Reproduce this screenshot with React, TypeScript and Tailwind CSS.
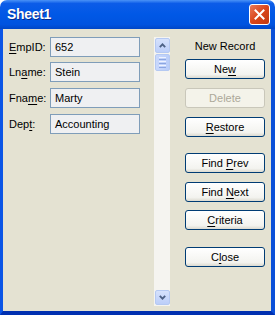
import React from 'react';

const font = "font-['Liberation_Sans',Arial,sans-serif]";

// label with one underlined mnemonic letter
const Mn = ({ text, at }: { text: string; at: number }) => (
  <span className="whitespace-pre">
    {text.slice(0, at)}
    <span className="underline underline-offset-[2px]">{text[at]}</span>
    {text.slice(at + 1)}
  </span>
);

const Field = ({ label, at, value, mt }: { label: string; at: number; value: string; mt: string }) => (
  <div className={`flex items-center ${mt}`}>
    <label className="w-[41px] text-[11px] text-black">
      <Mn text={label} at={at} />
    </label>
    <div className="flex h-[20px] w-[90px] items-center border border-[#7f9db9] bg-[#eff0f2] pl-[4px] text-[11px] text-black">
      {value}
    </div>
  </div>
);

const Btn = ({ label, at, mt, disabled }: { label: string; at: number; mt: string; disabled?: boolean }) => (
  <button
    className={
      disabled
        ? `${mt} flex h-[20px] w-[80px] items-center justify-center rounded-[3px] border border-[#c9c7ba] bg-[#f4f3ea] text-[11px] text-[#aca899]`
        : `${mt} flex h-[20px] w-[80px] items-center justify-center rounded-[3px] border border-[#003c74] bg-[linear-gradient(#ffffff,#f3f3ef_80%,#dcdad0)] text-[11px] text-black`
    }
  >
    {disabled ? label : <Mn text={label} at={at} />}
  </button>
);

const ScrollBtn = ({ up }: { up?: boolean }) => (
  <div className="flex h-[15px] w-[15px] items-center justify-center rounded-[2px] border border-[#b5c9f2] bg-[linear-gradient(#d6e2fc,#bccef9)]">
    <svg width="7" height="5" viewBox="0 0 7 5">
      <path
        d={up ? 'M0.8 4.2 L3.5 1.3 L6.2 4.2' : 'M0.8 0.8 L3.5 3.7 L6.2 0.8'}
        fill="none"
        stroke="#4d6185"
        strokeWidth="1.8"
      />
    </svg>
  </div>
);

export default function App() {
  return (
    <div className={`flex h-[315px] w-[275px] flex-col ${font}`}>
      {/* title bar */}
      <div className="flex h-[29px] items-center justify-between rounded-t-[7px] bg-[linear-gradient(#4a92f7_0%,#0c5ce8_12%,#0058e6_50%,#0053df_85%,#0046c6_100%)] pl-[7px] pr-[5px]">
        <span className="text-[14px] font-bold tracking-[-0.3px] text-white [text-shadow:1px_1px_0_#0a2a8a]">Sheet1</span>
        <div className="flex h-[21px] w-[21px] items-center justify-center rounded-[3px] border border-white bg-[linear-gradient(135deg,#eb7a5a,#d9451a_50%,#c13810)]">
          <svg width="11" height="11" viewBox="0 0 11 11">
            <path d="M1.5 1.5 L9.5 9.5 M9.5 1.5 L1.5 9.5" stroke="white" strokeWidth="2" strokeLinecap="square" />
          </svg>
        </div>
      </div>

      {/* body */}
      <div className="flex flex-1 border-b-[4px] border-l-[3px] border-r-[4px] border-b-[#0030b0] border-l-[#0b55e6] border-r-[#0a4fd8] bg-[#e4e2d2] pl-[6px] pt-[8px]">
        <div className="flex flex-col">
          <Field label="EmpID:" at={0} value="652" mt="mt-0" />
          <Field label="Lname:" at={2} value="Stein" mt="mt-[5px]" />
          <Field label="Fname:" at={3} value="Marty" mt="mt-[6px]" />
          <Field label="Dept:" at={3} value="Accounting" mt="mt-[6px]" />
        </div>

        {/* scrollbar */}
        <div className="mb-[5px] ml-[14px] flex w-[16px] flex-col items-center bg-[#f5f4f0] pt-[1px] pb-[1px]">
          <ScrollBtn up />
          <div className="mt-[1px] flex h-[17px] w-[15px] flex-col items-center justify-center gap-[1px] rounded-[2px] border border-[#b5c9f2] bg-[linear-gradient(90deg,#c9d8fc,#b9cdf9)]">
            <div className="h-[1px] w-[7px] bg-[#eef3ff]" />
            <div className="h-[1px] w-[7px] bg-[#8ca6e0]" />
            <div className="h-[1px] w-[7px] bg-[#eef3ff]" />
            <div className="h-[1px] w-[7px] bg-[#8ca6e0]" />
            <div className="h-[1px] w-[7px] bg-[#eef3ff]" />
            <div className="h-[1px] w-[7px] bg-[#8ca6e0]" />
          </div>
          <div className="flex-1" />
          <ScrollBtn />
        </div>

        {/* buttons */}
        <div className="ml-[15px] flex w-[80px] flex-col items-center">
          <div className="mt-[1px] h-[14px] text-[11px] text-black">New Record</div>
          <Btn label="New" at={2} mt="mt-[7px]" />
          <Btn label="Delete" at={0} mt="mt-[9px]" disabled />
          <Btn label="Restore" at={0} mt="mt-[9px]" />
          <Btn label="Find Prev" at={5} mt="mt-[16px]" />
          <Btn label="Find Next" at={5} mt="mt-[9px]" />
          <Btn label="Criteria" at={0} mt="mt-[8px]" />
          <Btn label="Close" at={1} mt="mt-[17px]" />
        </div>
      </div>
    </div>
  );
}
